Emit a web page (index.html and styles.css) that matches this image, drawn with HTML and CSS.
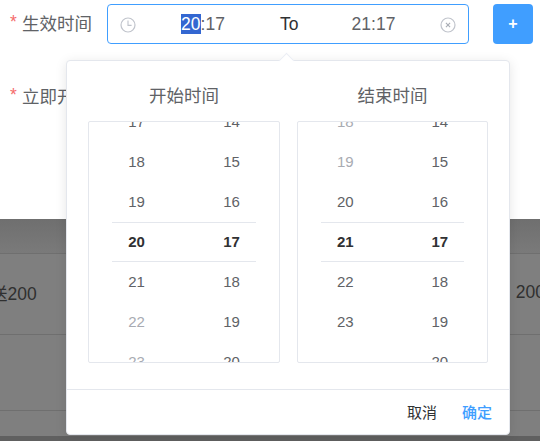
FILE: index.html
```html
<!DOCTYPE html>
<html lang="zh">
<head>
<meta charset="utf-8">
<title>生效时间</title>
<link rel="stylesheet" href="styles.css">
</head>
<body>
<div class="page">
  <section class="form">
    <div class="field">
      <label class="label"><span class="req">*</span>生效时间</label>
      <div class="range">
        <svg class="ico" viewBox="0 0 16 16" width="16" height="16"><circle cx="8" cy="8" r="7" fill="none" stroke="#c0c4cc" stroke-width="1.2"/><path d="M8 3.6V8.4H11.6" fill="none" stroke="#c0c4cc" stroke-width="1.1"/></svg>
        <span class="t t-start"><span class="sel">20</span>:17</span>
        <span class="to">To</span>
        <span class="t t-end">21:17</span>
        <svg class="ico" viewBox="0 0 16 16" width="16" height="16"><circle cx="8" cy="8" r="7" fill="none" stroke="#c0c4cc" stroke-width="1.2"/><path d="M5.9 5.9L10.1 10.1M10.1 5.9L5.9 10.1" fill="none" stroke="#a9adb5" stroke-width="1.1"/></svg>
      </div>
      <button class="add">+</button>
    </div>
    <div class="field field-2">
      <label class="label"><span class="req">*</span>立即开始</label>
    </div>
  </section>
  <section class="table">
    <div class="row r1"></div>
    <div class="row r2"><span>送200</span><span>200</span></div>
    <div class="row r3"></div>
    <div class="row r4"></div>
    <div class="row r5"></div>
  </section>

  <div class="picker">
    <div class="arrow"></div>
    <div class="panels">
      <div class="panel">
        <div class="title">开始时间</div>
        <div class="box">
          <div class="marker"></div>
          <ul class="col"><li>17</li><li>18</li><li>19</li><li class="on">20</li><li>21</li><li class="off">22</li><li class="off">23</li></ul>
          <ul class="col"><li>14</li><li>15</li><li>16</li><li class="on">17</li><li>18</li><li>19</li><li>20</li></ul>
        </div>
      </div>
      <div class="panel">
        <div class="title">结束时间</div>
        <div class="box">
          <div class="marker"></div>
          <ul class="col"><li class="off">18</li><li class="off">19</li><li>20</li><li class="on">21</li><li>22</li><li>23</li><li></li></ul>
          <ul class="col"><li>14</li><li>15</li><li>16</li><li class="on">17</li><li>18</li><li>19</li><li>20</li></ul>
        </div>
      </div>
    </div>
    <div class="foot">
      <button class="link cancel">取消</button>
      <button class="link ok">确定</button>
    </div>
  </div>
</div>
</body>
</html>
```
FILE: styles.css
```css
* { box-sizing: border-box; }
html, body { margin: 0; padding: 0; }
body {
  font-family: "Liberation Sans", "Noto Sans CJK SC", sans-serif;
  color: #606266;
  background: #fff;
}
.page {
  position: relative;
  width: 540px;
  height: 441px;
  overflow: hidden;
}
.form {
  height: 219px;
  padding-top: 4px;
  background: #fff;
}
.field {
  display: flex;
  align-items: center;
  height: 40px;
  padding-left: 10px;
}
.field-2 { margin-top: 33px; }
.label {
  display: flex;
  align-items: center;
  width: 97px;
  flex: none;
  padding-bottom: 3px;
  font-size: 17.5px;
  white-space: nowrap;
}
.req {
  width: 12px;
  color: #f56c6c;
  font-size: 17.5px;
}
.range {
  display: flex;
  align-items: center;
  width: 362px;
  height: 40px;
  flex: none;
  padding: 0 12px 0 12px;
  border: 1px solid #409eff;
  border-radius: 4px;
  font-size: 17.5px;
}
.ico { flex: none; margin-top: 1px; }
.t {
  width: 44px;
  flex: none;
  text-align: center;
  white-space: nowrap;
}
.t-start { margin-left: 45px; }
.to { margin-left: 55px; color: #303133; }
.t-end { margin-left: 53px; }
.range .ico:last-child { margin-left: auto; }
.sel { background: #3367d1; color: #fff; }
.add {
  width: 40px;
  height: 40px;
  margin-left: 24px;
  flex: none;
  padding: 0;
  border: 0;
  border-radius: 4px;
  background: #409eff;
  color: #fff;
  font: bold 16px "Liberation Sans", sans-serif;
}
.table {
  height: 222px;
  background: #7f7f7f;
  color: #303030;
  font-size: 17.5px;
}
.row {
  display: flex;
  justify-content: space-between;
  align-items: center;
  border-bottom: 1px solid #6f6f6f;
}
.r1 { height: 35px; background: linear-gradient(#6f6f6f, #7a7a7a); }
.r2 { height: 81px; margin-left: -10px; margin-right: -5px; padding-bottom: 4px; }
.r3 { height: 76px; }
.r4 { height: 25px; border-bottom: 0; }
.r5 { height: 5px; background: #606060; border-bottom: 0; }

.picker {
  position: absolute;
  left: 66px;
  top: 60px;
  width: 444px;
  height: 375px;
  background: #fff;
  border: 1px solid #e4e7ed;
  border-radius: 4px;
  box-shadow: 0 2px 12px rgba(0, 0, 0, .1);
}
.arrow {
  position: absolute;
  left: 214px;
  top: -6px;
  width: 11px;
  height: 11px;
  background: #fff;
  border-top: 1px solid #ebeef5;
  border-left: 1px solid #ebeef5;
  transform: rotate(45deg);
}
.panels {
  display: flex;
  justify-content: space-between;
  height: 328px;
  padding: 0 21px 0 21px;
}
.panel { width: 192px; }
.panel + .panel { width: 191px; }
.title {
  height: 60px;
  padding-top: 23px;
  line-height: 24px;
  font-size: 17.5px;
  text-align: center;
}
.box {
  position: relative;
  display: flex;
  height: 242px;
  border: 1px solid #e4e7ed;
  border-radius: 2px;
  overflow: hidden;
}
.marker {
  position: absolute;
  left: 23px;
  right: 23px;
  top: 100px;
  height: 40px;
  border-top: 1px solid #e4e7ed;
  border-bottom: 1px solid #e4e7ed;
}
.col {
  flex: 1;
  margin: -20px 0 0;
  padding: 0;
  list-style: none;
  font-size: 15px;
  text-align: center;
}
.col li { height: 40px; line-height: 40px; }
.col .on { color: #303133; font-weight: bold; }
.col .off { color: #a8abb2; }
.foot {
  display: flex;
  justify-content: flex-end;
  align-items: center;
  gap: 25px;
  height: 45px;
  padding: 0 17px 2px 0;
  border-top: 1px solid #e4e7ed;
}
.link {
  padding: 0;
  border: 0;
  background: none;
  font: 15px "Liberation Sans", "Noto Sans CJK SC", sans-serif;
}
.cancel { color: #303133; }
.ok { color: #409eff; font-weight: 500; }
```
